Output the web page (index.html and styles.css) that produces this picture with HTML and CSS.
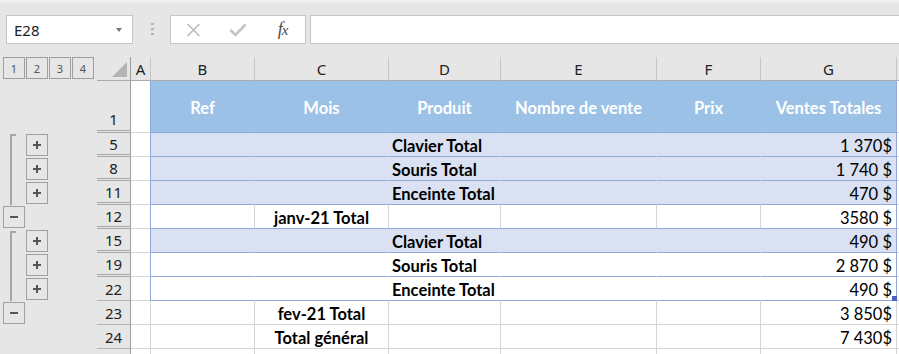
FILE: index.html
```html
<!DOCTYPE html>
<html lang="fr">
<head>
  <meta charset="UTF-8">
  <title>Ventes</title>
  <link rel="stylesheet" href="styles.css">
</head>
<body>
  <div class="toolbar">
    <div class="namebox"><span>E28</span><span class="caret"></span></div>
    <div class="grip"><i></i><i></i><i></i></div>
    <div class="fxbtns">
      <span class="fxbtn">
        <svg width="15" height="14" viewBox="0 0 15 14"><path d="M1.5 1 L13.5 13 M13.5 1 L1.5 13" stroke="#bcbcbc" stroke-width="1.6" fill="none"/></svg>
      </span>
      <span class="fxbtn">
        <svg width="18" height="14" viewBox="0 0 18 14"><path d="M1.5 7 L6.5 12 L16.5 1.5" stroke="#c4c4c4" stroke-width="2.6" fill="none"/></svg>
      </span>
      <span class="fxbtn"><span class="fx">f<small>x</small></span></span>
    </div>
    <div class="formula"></div>
  </div>

  <div class="sheet">
    <div class="row colhead">
      <div class="ol levels"><b>1</b><b>2</b><b>3</b><b>4</b></div>
      <div class="ch corner"><span class="tri"></span></div>
      <div class="ch">A</div>
      <div class="ch">B</div>
      <div class="ch">C</div>
      <div class="ch">D</div>
      <div class="ch">E</div>
      <div class="ch">F</div>
      <div class="ch">G</div>
      <div class="ch last"></div>
    </div>

    <div class="row tall t head">
      <div class="ol"></div>
      <div class="rh dbl bottom">1</div>
      <div class="cell a"></div>
      <div class="cell c mid">Ref</div>
      <div class="cell c mid">Mois</div>
      <div class="cell c mid">Produit</div>
      <div class="cell c mid">Nombre de vente</div>
      <div class="cell c mid">Prix</div>
      <div class="cell c g mid">Ventes Totales</div>
      <div class="cell h"></div>
    </div>

    <div class="row t band">
      <div class="ol"><span class="slot"><span class="line top"></span></span><span class="btn plus"></span></div>
      <div class="rh dbl">5</div>
      <div class="cell a"></div>
      <div class="cell c"></div>
      <div class="cell c"></div>
      <div class="cell c bold">Clavier Total</div>
      <div class="cell c"></div>
      <div class="cell c"></div>
      <div class="cell c g num">1 370$</div>
      <div class="cell h"></div>
    </div>

    <div class="row t band">
      <div class="ol"><span class="slot"><span class="line"></span></span><span class="btn plus"></span></div>
      <div class="rh dbl">8</div>
      <div class="cell a"></div>
      <div class="cell c"></div>
      <div class="cell c"></div>
      <div class="cell c bold">Souris Total</div>
      <div class="cell c"></div>
      <div class="cell c"></div>
      <div class="cell c g num">1 740 $</div>
      <div class="cell h"></div>
    </div>

    <div class="row t band">
      <div class="ol"><span class="slot"><span class="line"></span></span><span class="btn plus"></span></div>
      <div class="rh dbl">11</div>
      <div class="cell a"></div>
      <div class="cell c"></div>
      <div class="cell c"></div>
      <div class="cell c bold">Enceinte Total</div>
      <div class="cell c"></div>
      <div class="cell c"></div>
      <div class="cell c g num">470 $</div>
      <div class="cell h"></div>
    </div>

    <div class="row t">
      <div class="ol"><span class="btn minus"></span></div>
      <div class="rh dbl">12</div>
      <div class="cell a"></div>
      <div class="cell c grid"></div>
      <div class="cell c grid bold mid">janv-21 Total</div>
      <div class="cell c grid"></div>
      <div class="cell c grid"></div>
      <div class="cell c grid"></div>
      <div class="cell c g num">3580 $</div>
      <div class="cell h"></div>
    </div>

    <div class="row t band">
      <div class="ol"><span class="slot"><span class="line top low"></span></span><span class="btn plus"></span></div>
      <div class="rh dbl">15</div>
      <div class="cell a"></div>
      <div class="cell c"></div>
      <div class="cell c"></div>
      <div class="cell c bold">Clavier Total</div>
      <div class="cell c"></div>
      <div class="cell c"></div>
      <div class="cell c g num">490 $</div>
      <div class="cell h"></div>
    </div>

    <div class="row t white">
      <div class="ol"><span class="slot"><span class="line"></span></span><span class="btn plus"></span></div>
      <div class="rh dbl">19</div>
      <div class="cell a"></div>
      <div class="cell c"></div>
      <div class="cell c"></div>
      <div class="cell c bold">Souris Total</div>
      <div class="cell c"></div>
      <div class="cell c"></div>
      <div class="cell c g num">2 870 $</div>
      <div class="cell h"></div>
    </div>

    <div class="row t white">
      <div class="ol"><span class="slot"><span class="line"></span></span><span class="btn plus"></span></div>
      <div class="rh">22</div>
      <div class="cell a"></div>
      <div class="cell c"></div>
      <div class="cell c"></div>
      <div class="cell c bold">Enceinte Total</div>
      <div class="cell c"></div>
      <div class="cell c"></div>
      <div class="cell c g num handle">490 $</div>
      <div class="cell h"></div>
    </div>

    <div class="row">
      <div class="ol"><span class="btn minus"></span></div>
      <div class="rh">23</div>
      <div class="cell a"></div>
      <div class="cell c"></div>
      <div class="cell c bold mid">fev-21 Total</div>
      <div class="cell c"></div>
      <div class="cell c"></div>
      <div class="cell c"></div>
      <div class="cell c num">3 850$</div>
      <div class="cell h"></div>
    </div>

    <div class="row">
      <div class="ol"></div>
      <div class="rh">24</div>
      <div class="cell a"></div>
      <div class="cell c"></div>
      <div class="cell c bold mid">Total général</div>
      <div class="cell c"></div>
      <div class="cell c"></div>
      <div class="cell c"></div>
      <div class="cell c num">7 430$</div>
      <div class="cell h"></div>
    </div>

    <div class="row">
      <div class="ol"></div>
      <div class="rh"></div>
      <div class="cell a"></div>
      <div class="cell c"></div>
      <div class="cell c"></div>
      <div class="cell c"></div>
      <div class="cell c"></div>
      <div class="cell c"></div>
      <div class="cell c"></div>
      <div class="cell h"></div>
    </div>
  </div>
</body>
</html>
```

FILE: styles.css
```css
body {
  margin: 0;
  width: 899px;
  height: 354px;
  overflow: hidden;
  background: #e6e6e6;
  font-family: 'Noto Sans', 'DejaVu Sans', sans-serif;
  color: #222;
}

/* formula bar */
.toolbar {
  display: flex;
  align-items: flex-start;
  height: 57px;
  box-sizing: border-box;
  padding-top: 15px;
  background: linear-gradient(#f3f3f3 0, #e6e6e6 4px);
}
.namebox {
  display: flex;
  align-items: center;
  justify-content: space-between;
  box-sizing: border-box;
  width: 127px;
  height: 29px;
  margin-left: 6px;
  padding: 0 10px 0 7px;
  background: #fff;
  border: 1px solid #c6c6c6;
  font-size: 15px;
}
.caret {
  width: 0;
  height: 0;
  border-left: 3px solid transparent;
  border-right: 3px solid transparent;
  border-top: 4px solid #777;
}
.grip {
  display: flex;
  flex-direction: column;
  gap: 3px;
  margin: 8px 0 0 18px;
}
.grip i {
  width: 3px;
  height: 2px;
  background: #b4b4b4;
}
.fxbtns {
  display: flex;
  box-sizing: border-box;
  width: 136px;
  height: 29px;
  margin-left: 16px;
  background: #fff;
  border: 1px solid #c6c6c6;
}
.fxbtn {
  display: flex;
  align-items: center;
  justify-content: center;
  width: 45px;
}
.fx {
  font-family: 'Liberation Serif', serif;
  font-style: italic;
  font-size: 18px;
  color: #4a4a4a;
  letter-spacing: -1px;
}
.fx small {
  font-size: 15px;
}
.formula {
  flex: 1;
  height: 29px;
  box-sizing: border-box;
  margin: 0 -2px 0 4px;
  background: #fff;
  border: 1px solid #c6c6c6;
}

/* grid */
.row {
  display: grid;
  grid-template-columns: 97px 34px 20px 104px 134px 112px 156px 104px 136px 1fr;
  height: 24px;
}
.row.tall {
  height: 52px;
}
.ol {
  display: flex;
  align-items: center;
  gap: 1px;
  padding-left: 3px;
}
.slot {
  display: flex;
  width: 22px;
  height: 100%;
}
.line {
  width: 0;
  margin-left: 7px;
  border-left: 2px solid #a6a6a6;
}
.line.top {
  width: 4px;
  margin-top: 1px;
  border-top: 2px solid #a6a6a6;
}
.line.low {
  margin-top: 2px;
}
.btn {
  position: relative;
  width: 22px;
  height: 22px;
  box-sizing: border-box;
  border: 1px solid #a0a0a0;
}
.btn::before,
.plus::after {
  content: '';
  position: absolute;
  left: 6px;
  top: 9px;
  width: 8px;
  height: 2px;
  background: #555;
}
.plus::after {
  left: 9px;
  top: 6px;
  width: 2px;
  height: 8px;
}

.levels {
  gap: 1px;
  align-items: flex-start;
}
.levels b {
  display: flex;
  align-items: center;
  justify-content: center;
  width: 22px;
  height: 22px;
  box-sizing: border-box;
  border: 1px solid #9e9e9e;
  font-weight: 400;
  font-size: 11px;
  color: #555;
}

.ch {
  display: flex;
  align-items: center;
  justify-content: center;
  border-right: 1px solid #c6c6c6;
  border-bottom: 1px solid #ababab;
  font-size: 15px;
  color: #222;
}
.ch.corner {
  align-items: flex-end;
  justify-content: flex-end;
  padding: 0 3px 3px 0;
  border-right-color: #9e9e9e;
}
.tri {
  width: 0;
  height: 0;
  border-left: 15px solid transparent;
  border-bottom: 15px solid #b4b4b4;
}
.ch.last {
  border-right: none;
}

.rh {
  display: flex;
  align-items: center;
  justify-content: center;
  border-right: 1px solid #9e9e9e;
  border-bottom: 1px solid #b4b4b4;
  font-size: 15px;
  color: #222;
}
.rh.dbl {
  border-bottom: 3px double #a8a8a8;
}
.rh.bottom {
  align-items: flex-end;
  padding-bottom: 1px;
}

.cell {
  display: flex;
  align-items: center;
  box-sizing: border-box;
  padding: 2px 3px 0;
  background: #fff;
  border-right: 1px solid #d4d4d4;
  border-bottom: 1px solid #d4d4d4;
  font-family: Lato, 'Liberation Sans', sans-serif;
  font-size: 16.5px;
  color: #000;
  white-space: nowrap;
}
.cell.h {
  border-right: none;
}
.cell.mid {
  justify-content: center;
}
.cell.num {
  justify-content: flex-end;
  padding-right: 4px;
}
.cell.bold {
  font-weight: 700;
}

.t .cell.a,
.t .cell.g {
  border-right-color: #8ea9db;
}
.t .cell.c {
  border-bottom-color: #8ea9db;
}
.t.head .cell.c,
.t.band .cell.c,
.t.white .cell.c {
  border-right-color: transparent;
}
.t.head .cell.g,
.t.band .cell.g,
.t.white .cell.g {
  border-right-color: #8ea9db;
}
.t.head .cell.c {
  background: #9bc2e6;
  color: #fff;
  font-weight: 700;
}
.t.band .cell.c {
  background: #d9e1f2;
}

.handle {
  position: relative;
}
.handle::after {
  content: '';
  position: absolute;
  right: -1px;
  bottom: -1px;
  width: 5px;
  height: 5px;
  background: #4a5fc4;
}
```
